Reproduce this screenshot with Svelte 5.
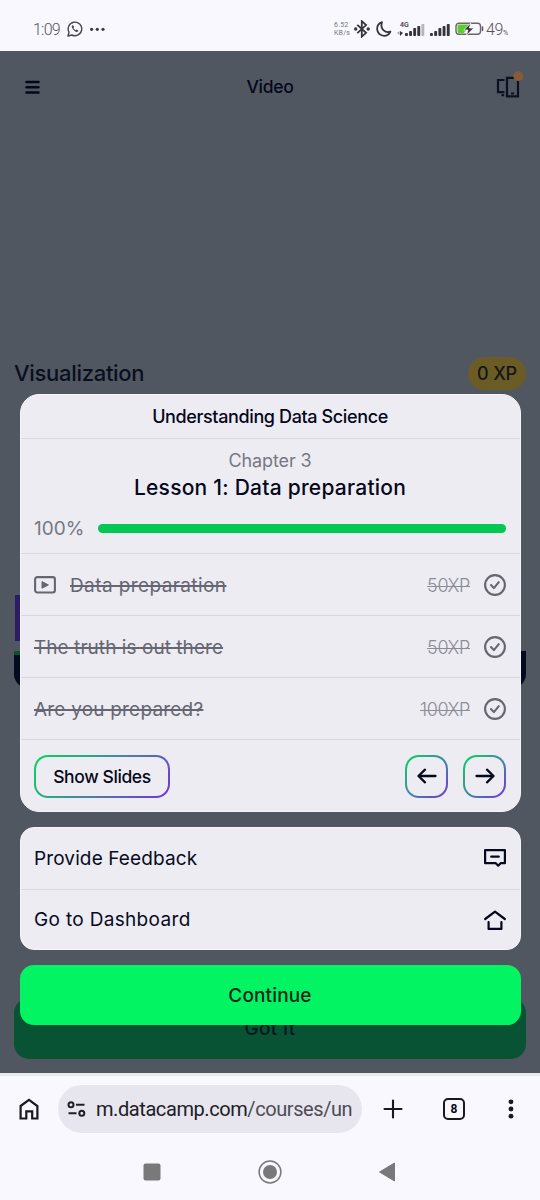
<script lang="ts">
  const progress = 100;

  const exercises = [
    { title: "Data preparation", xp: 50, video: true, spacing: 0.4 },
    { title: "The truth is out there", xp: 50, video: false, spacing: 0.05 },
    { title: "Are you prepared?", xp: 100, video: false, spacing: 0.2 },
  ];

  const bars = [3, 5, 8, 10, 12];
</script>

<div class="phone">
  <header class="status">
    <div class="status-left">
      <span class="clock">1:09</span>
      <svg width="16" height="16" viewBox="0 0 16 16" fill="none" stroke="#47474d" stroke-width="1.4">
        <path d="M1 15l1-3.8A6.8 6.8 0 1 1 4.9 14z" stroke-linejoin="round" />
        <path d="M5.2 4.3c-.8.8-.7 2.2.9 4.3 2 2.3 3.7 3 5 1.7l.3-.7-1.8-1.1-.9.8c-1-.4-1.9-1.3-2.3-2.2l.7-.8-.7-1.9z" fill="#47474d" stroke="none" />
      </svg>
      <svg width="17" height="16" viewBox="0 0 17 16" fill="#3c3c42">
        <circle cx="2.6" cy="8.3" r="1.6" />
        <circle cx="8.3" cy="8.3" r="1.6" />
        <circle cx="14" cy="8.3" r="1.6" />
      </svg>
    </div>
    <div class="status-right">
      <div class="speed"><span>6.52</span><span>KB/s</span></div>
      <svg width="16" height="18" viewBox="0 0 16 18" fill="none" stroke="#35353a" stroke-width="1.8">
        <path d="M3.3 4.8l8.8 8-4.3 3.8V1.2l4.3 3.9-8.8 8" />
        <circle cx="1.7" cy="9" r=".8" fill="#35353a" />
        <circle cx="14.2" cy="9" r=".8" fill="#35353a" />
      </svg>
      <svg class="moon" width="16" height="16" viewBox="0 0 16 16" fill="none" stroke="#35353a" stroke-width="1.8" stroke-linejoin="round">
        <path d="M6 1.2C2.8 2.4 1 5 1.1 8c.2 4 3.2 6.8 7 6.8 2.9 0 5.2-1.6 6.3-4.2C9 12.5 3.8 7.7 6 1.2z" />
      </svg>
      <div class="signal">
        <span class="network">4G</span>
        <svg width="28" height="13" viewBox="0 0 28 13" fill="#35353a">
          <path d="M0 10l2.5-2v4z" fill="#a0a0a5" />
          <path d="M3 8l3 2-3 3z" />
          {#each bars as h, i}
            <rect x={8 + i * 4.1} y={13 - h} width="2.9" height={h} rx=".8" fill={i === 4 ? "#b5b5ba" : "#35353a"} />
          {/each}
        </svg>
      </div>
      <svg class="signal-two" width="20" height="13" viewBox="0 0 20 13" fill="#35353a">
        {#each bars as h, i}
          <rect x={i * 4.2} y={13 - h} width="2.9" height={h} rx=".8" />
        {/each}
      </svg>
      <svg class="battery" width="29" height="14" viewBox="0 0 29 14">
        <rect x="1" y="1.2" width="24.5" height="11" rx="3" fill="none" stroke="#66666b" stroke-width="1.4" />
        <path d="M4.5 2.5H15L9 11H4.5q-2 0-2-1.5V4q0-1.5 2-1.5z" fill="#5ccc2c" />
        <path d="M15.8 1L8.7 8h4.2l-1.5 5.4L18.8 6h-4.4z" fill="#35353a" stroke="#f8f7fe" stroke-width=".8" />
        <path d="M27.5 5v3.5" stroke="#55555a" stroke-width="1.5" stroke-linecap="round" />
      </svg>
      <span class="percent">49<small>%</small></span>
    </div>
  </header>

  <main class="app">
    <div class="page">
      <nav class="topbar">
        <svg width="16" height="14" viewBox="0 0 16 14" stroke="#05081b" stroke-width="2.5" stroke-linecap="round">
          <path d="M2.5 2h12M2.5 7.200h12M2.500 12.400h12" />
        </svg>
        <span class="topbar-title">Video</span>
        <svg class="devices" width="29" height="28" viewBox="0 0 29 28" fill="none" stroke="#0c1024" stroke-width="2.200">
          <path d="M9.500 9H3v12.200h6.500M12 6.800h11v18.500H12zM6.500 24.200h2.700M16 22.500h3.200" />
          <circle cx="23.300" cy="5.200" r="4.900" fill="#8a5a35" stroke="none" />
        </svg>
      </nav>
      <div class="chapter">
        <h1>Visualization</h1>
        <span class="xp-pill">0 XP</span>
      </div>
      <div class="slide">
        <div class="slide-purple"></div>
        <div class="slide-footer"></div>
      </div>
      <button class="got-it">Got It</button>
    </div>

    <div class="overlay">
      <section class="card lesson">
        <h2>Understanding Data Science</h2>
        <div class="summary">
          <p class="chapter-number">Chapter 3</p>
          <p class="lesson-title">Lesson 1: Data preparation</p>
          <div class="progress">
            <span>{progress}%</span>
            <div class="track"><div class="fill" style="width: {progress}%"></div></div>
          </div>
        </div>
        {#each exercises as exercise}
          <div class="row">
            {#if exercise.video}
              <svg class="video" width="22" height="18" viewBox="0 0 22 18">
                <rect x="1.1" y="1.1" width="19.8" height="15.4" rx="2.2" fill="none" stroke="#656671" stroke-width="2.1" />
                <path d="M8 5.600v6.600l6.400-3.300z" fill="#656671" stroke="#656671" stroke-linejoin="round" />
              </svg>
            {/if}
            <span class="exercise" style="letter-spacing: {exercise.spacing}px">{exercise.title}</span>
            <span class="xp">{exercise.xp}XP</span>
            <svg width="22" height="22" viewBox="0 0 22 22" fill="none" stroke="#656671" stroke-width="2.1" stroke-linecap="round" stroke-linejoin="round">
              <circle cx="11" cy="11" r="9.9" />
              <path d="M7 11l2.900 3.100 4.900-5.900" />
            </svg>
          </div>
        {/each}
        <div class="actions">
          <button class="outline show-slides">Show Slides</button>
          <button class="outline square" aria-label="Previous">
            <svg width="20" height="16" viewBox="0 0 20 16" fill="none" stroke="#05071a" stroke-width="2.3" stroke-linecap="round" stroke-linejoin="round">
              <path d="M18.500 8h-17M8 1.700L1.500 8 8 14.300" />
            </svg>
          </button>
          <button class="outline square" aria-label="Next">
            <svg width="20" height="16" viewBox="0 0 20 16" fill="none" stroke="#05071a" stroke-width="2.3" stroke-linecap="round" stroke-linejoin="round">
              <path d="M1.500 8h17M12 1.700L18.500 8 12 14.300" />
            </svg>
          </button>
        </div>
      </section>

      <section class="card links">
        <div class="row link">
          <span class="feedback">Provide Feedback</span>
          <svg width="22" height="20" viewBox="0 0 22 20" fill="none" stroke="#050b1d" stroke-width="2.2" stroke-linejoin="round" stroke-linecap="round">
            <path d="M1.100 2.200h19.800v13h-4.300l-2.400 2.500-2.400-2.500H1.100zM7.200 8.700h7.600" />
          </svg>
        </div>
        <div class="row link">
          <span class="dashboard">Go to Dashboard</span>
          <svg width="22" height="20" viewBox="0 0 22 20" fill="none" stroke="#05071a" stroke-width="2.2" stroke-linejoin="round" stroke-linecap="round">
            <path d="M1.200 9L11 1.600 20.800 9M4.600 12v6.900h12.800V12" />
          </svg>
        </div>
      </section>

      <button class="continue">Continue</button>
    </div>
  </main>

  <footer class="browser">
    <div class="toolbar">
      <svg width="22" height="22" viewBox="0 0 22 22" fill="none" stroke="#19191f" stroke-width="2.2">
        <path d="M2.600 8L11 1.800 19.400 8v12.500h-5.200v-7.200H8.300v7.200H2.600z" />
      </svg>
      <div class="address">
        <svg width="19" height="16" viewBox="0 0 19 16" fill="none" stroke="#202026" stroke-width="2">
          <circle cx="4" cy="3.7" r="2.5" />
          <path d="M9 3.700h8.500M1.500 12.300h8" />
          <circle cx="14.8" cy="12.3" r="2.5" />
        </svg>
        <span class="url">m.datacamp.com<em>/courses/un</em></span>
      </div>
      <svg class="plus" width="20" height="20" viewBox="0 0 20 20" stroke="#19191f" stroke-width="2.1" stroke-linecap="round">
        <path d="M10 1.500v17M1.500 10h17" />
      </svg>
      <span class="tabs">8</span>
      <svg class="more" width="6" height="20" viewBox="0 0 6 20" fill="#19191f">
        <circle cx="3" cy="2.8" r="2.4" />
        <circle cx="3" cy="10" r="2.4" />
        <circle cx="3" cy="17.2" r="2.4" />
      </svg>
    </div>
    <div class="system">
      <svg width="24" height="24" viewBox="0 0 24 24" fill="#79797c"><rect x="3.5" y="3.5" width="17" height="17" rx="2" /></svg>
      <svg width="24" height="24" viewBox="0 0 24 24" fill="#79797c">
        <circle cx="12" cy="12" r="10.9" fill="none" stroke="#79797c" stroke-width="1.5" />
        <circle cx="12" cy="12" r="7" />
      </svg>
      <svg width="24" height="24" viewBox="0 0 24 24" fill="#79797c" stroke="#79797c" stroke-linejoin="round"><path d="M4.500 12L19.500 3v18z" /></svg>
    </div>
  </footer>
</div>

<style>
  :global(body) {
    margin: 0;
    background: #f9f8fe;
  }
  .phone {
    width: 540px;
    height: 1200px;
    display: flex;
    flex-direction: column;
    overflow: hidden;
    font-family: Inter, sans-serif;
    color: #05071a;
  }
  .phone * {
    box-sizing: border-box;
  }
  svg {
    display: block;
    flex: none;
  }
  h1, h2, p {
    margin: 0;
  }
  button {
    border: 0;
    padding: 0;
    font: inherit;
    color: inherit;
  }

  .status {
    height: 51px;
    padding: 7px 29px 0 33px;
    display: flex;
    align-items: center;
    justify-content: space-between;
    color: #55555b;
  }
  .status-left, .status-right {
    display: flex;
    align-items: center;
  }
  .clock {
    width: 34px;
    font: 300 16px Roboto, sans-serif;
    letter-spacing: -0.8px;
  }
  .status-left svg + svg {
    margin-left: 6px;
  }
  .speed {
    width: 20px;
    display: flex;
    flex-direction: column;
    font: 400 7px/8px Roboto, sans-serif;
    letter-spacing: 0.2px;
    color: #77777c;
  }
  .moon {
    margin-left: 6px;
  }
  .signal {
    margin-left: 5px;
    width: 28px;
    position: relative;
  }
  .network {
    position: absolute;
    left: 3px;
    top: -2px;
    font: 500 7px/8px Roboto, sans-serif;
    color: #35353a;
  }
  .signal-two {
    margin-left: 5px;
  }
  .battery {
    margin-left: 5px;
  }
  .percent {
    margin-left: 2px;
    width: 25px;
    white-space: nowrap;
    font: 300 16px Roboto, sans-serif;
    letter-spacing: -0.4px;
  }
  .percent small {
    font-size: 7px;
    font-weight: 400;
  }

  .app {
    height: 1022px;
    position: relative;
    background: #515761;
  }
  .page {
    height: 100%;
    padding: 0 14px;
    display: flex;
    flex-direction: column;
  }
  .topbar {
    height: 72px;
    padding: 0 2px 0 10px;
    display: flex;
    align-items: center;
    justify-content: space-between;
  }
  .topbar-title {
    padding: 0 0 1px 5px;
    font-size: 17.5px;
    font-weight: 500;
    letter-spacing: -0.25px;
  }
  .devices {
    position: relative;
    top: -2px;
  }
  .chapter {
    margin-top: 234px;
    height: 33px;
    display: flex;
    align-items: center;
    justify-content: space-between;
  }
  h1 {
    padding-bottom: 2px;
    font-size: 22px;
    font-weight: 500;
    letter-spacing: -0.3px;
    color: #0a0f20;
  }
  .xp-pill {
    width: 58px;
    height: 33px;
    border-radius: 17px;
    background: #6b5c25;
    color: #15161d;
    font-size: 18px;
    font-weight: 500;
    letter-spacing: -0.2px;
    line-height: 33px;
    text-align: center;
  }
  .slide {
    margin-top: 205px;
    height: 93px;
  }
  .slide-purple {
    height: 46px;
    width: 40px;
    margin-left: 1px;
    background: #2c1b65;
  }
  .slide-footer {
    margin-top: 10px;
    height: 37px;
    border-radius: 0 0 14px 14px;
    background: #050a1e;
  }
  .slide-footer::before {
    content: "";
    display: block;
    width: 40px;
    height: 4px;
    background: #0a5133;
  }
  .got-it {
    margin-top: 310px;
    height: 61px;
    border-radius: 15px;
    background: #085334;
    color: #06191c;
    font-size: 19px;
    font-weight: 500;
    letter-spacing: 0.3px;
  }

  .overlay {
    position: absolute;
    inset: 343px 19.5px 48px;
    display: flex;
    flex-direction: column;
    gap: 15px;
  }
  .card {
    overflow: hidden;
    border: 1px solid #f5f5f9;
    background: #edecf2;
  }
  .lesson {
    height: 418px;
    border-radius: 19px;
  }
  h2 {
    height: 43px;
    line-height: 43px;
    font-size: 18px;
    font-weight: 500;
    letter-spacing: -0.38px;
    text-align: center;
  }
  .summary {
    height: 115px;
    padding: 9px 13.5px 0;
    border-top: 1px solid #d8d8df;
    text-align: center;
  }
  .chapter-number {
    font-size: 18px;
    line-height: 25px;
    letter-spacing: -0.1px;
    color: #777883;
  }
  .lesson-title {
    font-size: 21px;
    line-height: 29px;
    font-weight: 500;
    letter-spacing: 0.23px;
  }
  .progress {
    margin-top: 13px;
    height: 26px;
    display: flex;
    align-items: center;
    font-size: 19px;
    color: #777883;
  }
  .progress span {
    width: 64px;
    text-align: left;
  }
  .track {
    flex: 1;
    height: 9px;
    border-radius: 5px;
    background: #d8d8df;
  }
  .fill {
    height: 100%;
    border-radius: 5px;
    background: #03c954;
  }
  .row {
    height: 62px;
    padding: 1px 13.5px 0;
    display: flex;
    align-items: center;
    border-top: 1px solid #d8d8df;
  }
  .video {
    margin-right: 14px;
  }
  .exercise {
    flex: 1;
    padding-top: 1px;
    font-size: 19px;
    color: #656671;
    text-decoration: line-through 1.6px;
  }
  .xp {
    margin-right: 14px;
    font-size: 18px;
    font-weight: 300;
    letter-spacing: -0.4px;
    color: #8b8c96;
    text-decoration: line-through 1.4px;
  }
  .actions {
    height: 72px;
    padding: 1px 13.5px 0;
    display: flex;
    align-items: center;
    border-top: 1px solid #d8d8df;
  }
  .outline {
    height: 43px;
    border: 2px solid transparent;
    border-radius: 14px;
    background:
      linear-gradient(#edecf2, #edecf2) padding-box,
      linear-gradient(135deg, #03d85b, #4588a0 50%, #7432dc) border-box;
    display: grid;
    place-items: center;
  }
  .show-slides {
    width: 136px;
    margin-right: auto;
    font-size: 17.5px;
    font-weight: 500;
    letter-spacing: -0.4px;
  }
  .square {
    width: 43px;
    margin-left: 15px;
  }
  .links {
    height: 123px;
    border-radius: 14px;
  }
  .link {
    height: 61px;
    padding-top: 0;
    justify-content: space-between;
    font-size: 19px;
    color: #070b1d;
  }
  .link:first-child {
    border-top: 0;
    padding-bottom: 1px;
  }
  .feedback {
    letter-spacing: 0.12px;
  }
  .dashboard {
    padding-bottom: 1px;
    letter-spacing: 0.33px;
  }
  .continue {
    height: 60px;
    border-radius: 14px;
    background: #03f463;
    color: #07251c;
    font-size: 19px;
    font-weight: 500;
    letter-spacing: 0.15px;
  }

  .browser {
    height: 127px;
    border-top: 3px solid #e9eaf0;
    background: #f9f8fe;
  }
  .toolbar {
    height: 66px;
    padding: 0 26px 0 18px;
    display: flex;
    align-items: center;
  }
  .address {
    margin-left: 18px;
    width: 304px;
    height: 48px;
    padding-left: 9px;
    border-radius: 24px;
    background: #e7e5ee;
    display: flex;
    align-items: center;
  }
  .url {
    margin-left: 10px;
    font: 400 20px Roboto, sans-serif;
    letter-spacing: -0.42px;
    color: #202026;
    white-space: nowrap;
  }
  .url em {
    font-style: normal;
    color: #4d4c55;
  }
  .plus {
    margin-left: 21px;
  }
  .tabs {
    margin-left: 40px;
    width: 22px;
    height: 22px;
    border: 2px solid #19191f;
    border-radius: 5px;
    font: 700 12px/18px Roboto, sans-serif;
    text-align: center;
  }
  .more {
    margin-left: auto;
  }
  .system {
    height: 58px;
    padding: 1px 141px 0 140px;
    display: flex;
    align-items: center;
    justify-content: space-between;
  }
</style>
